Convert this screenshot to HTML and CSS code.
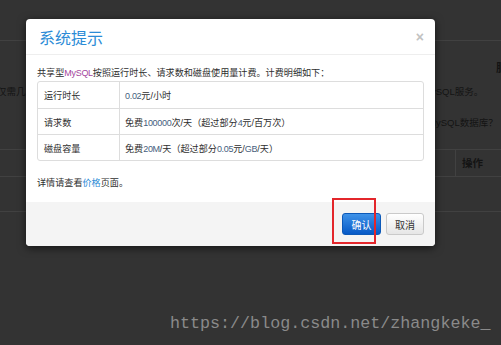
FILE: index.html
```html
<!DOCTYPE html>
<html lang="zh-CN">
<head>
    <meta charset="UTF-8">
    <meta name="viewport" content="width=device-width, initial-scale=1.0">
    <title>系统提示</title>
    <link rel="stylesheet" href="styles.css">
</head>
<body>
    <div class="page">
        <div class="topbar"></div>
        <div class="intro">
            <div class="side-title">服务</div>
            <div class="intro-line">
                <span class="cut-left w1">仅需几</span>
                <span>MySQL服务。</span>
            </div>
            <div class="intro-line">
                <span class="cut-left w2"></span>
                <span>MySQL数据库？</span>
            </div>
        </div>
        <div class="bg-table">
            <div class="bg-row head">
                <div class="bg-main"></div>
                <div class="bg-op">操作</div>
            </div>
            <div class="bg-row body-row"></div>
        </div>
    </div>

    <div class="modal">
        <div class="modal-header">
            <h3 class="modal-title">系统提示</h3>
            <span class="close">×</span>
        </div>
        <div class="modal-body">
            <p class="desc">共享型<span class="en brand">MySQL</span>按照运行时长、请求数和磁盘使用量计费。计费明细如下：</p>
            <table class="price-table">
                <tr>
                    <td class="name">运行时长</td>
                    <td><span class="en num">0.02</span>元/小时</td>
                </tr>
                <tr>
                    <td class="name">请求数</td>
                    <td>免费<span class="en num">100000</span>次/天（超过部分<span class="en num">4</span>元/百万次）</td>
                </tr>
                <tr>
                    <td class="name">磁盘容量</td>
                    <td>免费<span class="en num">20M</span>/天（超过部分<span class="en num">0.05</span>元/<span class="en num">GB</span>/天）</td>
                </tr>
            </table>
            <p class="note">详情请查看<a href="#" class="link">价格</a>页面。</p>
        </div>
        <div class="modal-footer">
            <button class="btn btn-primary">确认</button>
            <button class="btn btn-default">取消</button>
        </div>
    </div>

    <div class="highlight"></div>
    <div class="watermark">https://blog.csdn.net/zhangkeke_</div>
</body>
</html>
```

FILE: styles.css
```css
* {
    box-sizing: border-box;
}
body {
    margin: 0;
    width: 501px;
    height: 345px;
    overflow: hidden;
    position: relative;
    background-color: #333;
    font-family: "Liberation Sans", "Noto Sans CJK SC", sans-serif;
}

/* page behind the overlay */
.page {
    color: #141414;
    font-size: 9.5px;
}
.topbar {
    height: 41px;
    border-bottom: 1px solid #414141;
}
.intro {
    display: flex;
    flex-direction: column;
    padding-top: 19px;
}
.side-title {
    height: 16px;
    line-height: 16px;
    padding-left: 496px;
    font-size: 11px;
    font-weight: bold;
    white-space: nowrap;
}
.intro-line {
    display: flex;
    height: 31px;
    line-height: 31px;
    white-space: nowrap;
}
.intro-line:first-of-type {
    margin-top: 6px;
}
.cut-left {
    margin-left: -3px;
    flex-shrink: 0;
}
.w1 {
    width: 426px;
}
.w2 {
    width: 431px;
}
.bg-table {
    margin-top: 11px;
    border-top: 1px solid #414141;
}
.bg-row {
    display: flex;
    border-bottom: 1px solid #414141;
}
.bg-row.head {
    height: 27px;
    line-height: 26px;
    font-weight: bold;
}
.bg-row.body-row {
    height: 35px;
}
.bg-main {
    width: 456px;
    border-right: 1px solid #414141;
}
.bg-op {
    padding-left: 6px;
    font-size: 10.5px;
}

/* dialog */
.modal {
    position: absolute;
    left: 26px;
    top: 19px;
    width: 409px;
    height: 227px;
    display: flex;
    flex-direction: column;
    background-color: #fff;
    border-radius: 4px;
    overflow: hidden;
    box-shadow: 0 2px 8px rgba(0, 0, 0, 0.6);
    color: #2e2e2e;
    font-size: 9.1px;
}
.modal-header {
    height: 36px;
    flex-shrink: 0;
    display: flex;
    align-items: center;
    justify-content: space-between;
    padding: 0 11px 0 13px;
    border-bottom: 1px solid #eee;
}
.modal-title {
    margin: 0;
    font-size: 16px;
    font-weight: normal;
    color: #2b8bd6;
    font-family: "Noto Sans CJK SC", sans-serif;
}
.close {
    color: #c2c2c2;
    font-size: 14px;
    font-weight: bold;
}
.modal-body {
    flex: 1;
    padding: 11px 11px 0;
}
.desc {
    margin: 0;
    line-height: 14px;
    white-space: nowrap;
}
.en {
    font-size: 9px;
    letter-spacing: -0.3px;
}
.brand {
    color: #a3479e;
}
.num {
    color: #45607e;
}
.price-table {
    width: 100%;
    margin-top: 1px;
    border: 1px solid #ddd;
    border-radius: 3px;
    border-collapse: separate;
    border-spacing: 0;
}
.price-table td {
    height: 26px;
    padding: 0 0 0 5px;
    white-space: nowrap;
}
.price-table tr + tr td {
    border-top: 1px solid #ddd;
}
.price-table td.name {
    width: 82px;
    padding-left: 6px;
    border-right: 1px solid #ddd;
}
.note {
    margin: 15px 0 0;
    line-height: 14px;
}
.link {
    color: #2b8bd6;
    text-decoration: none;
}
.modal-footer {
    height: 44px;
    flex-shrink: 0;
    display: flex;
    align-items: center;
    justify-content: flex-end;
    gap: 5px;
    padding-right: 11px;
    background-color: #f4f4f4;
}
.btn {
    height: 22px;
    padding: 0;
    border-radius: 3px;
    font-family: "Noto Sans CJK SC", sans-serif;
    font-size: 10px;
    cursor: pointer;
}
.btn-primary {
    width: 39px;
    color: #fff;
    border: 1px solid #0c59b8;
    background: linear-gradient(#3e92e8, #0759c6);
}
.btn-default {
    width: 38px;
    color: #333;
    border: 1px solid #cacaca;
    background: linear-gradient(#fff, #e6e6e6);
}

/* annotations on top of the screenshot */
.highlight {
    position: absolute;
    left: 332px;
    top: 198px;
    width: 44px;
    height: 46px;
    border: 2px solid #e3262b;
}
.watermark {
    position: absolute;
    left: 170px;
    top: 314px;
    font-family: "Liberation Mono", monospace;
    font-size: 16.7px;
    color: #8a8a8a;
    white-space: nowrap;
}
```
